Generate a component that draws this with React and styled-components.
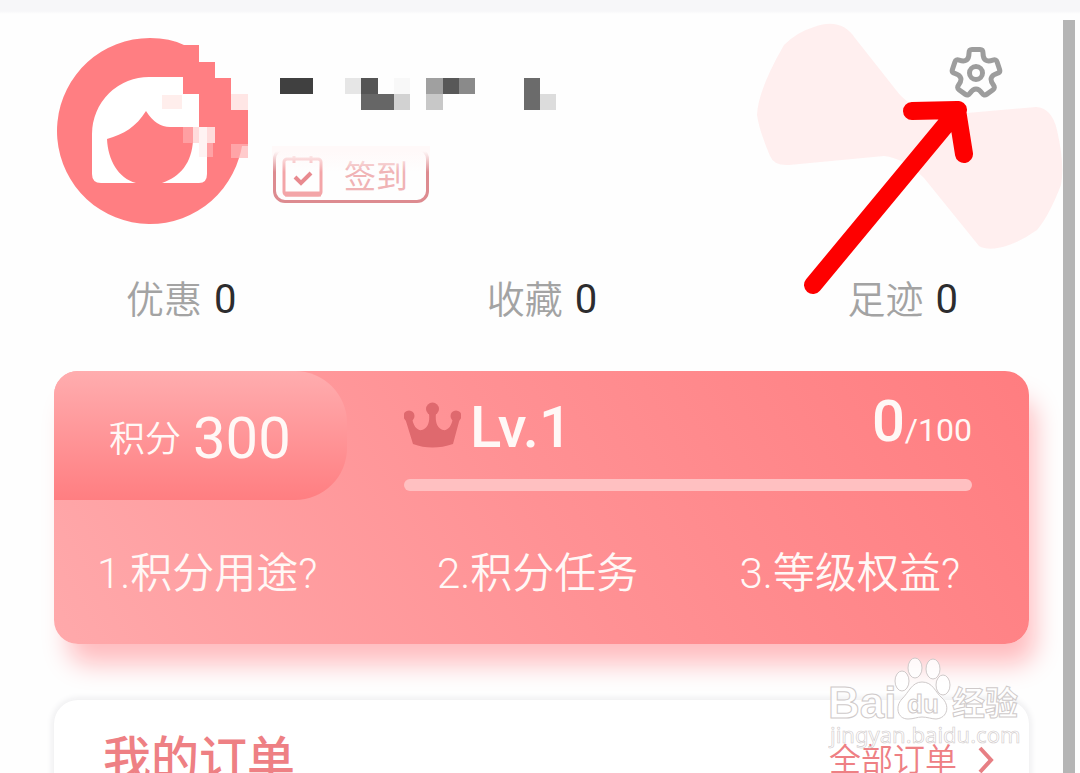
import styled, { createGlobalStyle } from "styled-components";

const COLOR = {
    pink: "#ff7e82",
    title: "#ee8084",
    line: "#dd8b90",
    gray: "#a3a3a3",
    dark: "#2c2c2e",
};

const GlobalStyle = createGlobalStyle`
    *{
        box-sizing: border-box;
    }
    body{
        margin: 0;
        background-color: #fefefe;
        font-family: Roboto, "Noto Sans CJK SC", sans-serif;
    }
    button, a{
        font-family: inherit;
        color: inherit;
        text-decoration: none;
    }
`;

const Page = styled.div`
    position: relative;
    height: 100vh;
    overflow: hidden;
    display: flex;
    flex-direction: column;
`;

const TopStrip = styled.div`
    flex: none;
    height: 14px;
    background: linear-gradient(#f7f7f9 80%, #fefefe);
`;

const Body = styled.div`
    flex: 1;
    min-height: 0;
    display: flex;
    padding-right: 5px;
`;

const Content = styled.main`
    flex: 1;
    min-width: 0;
    padding: 0 34px 0 54px;
`;

const ScrollTrack = styled.div`
    flex: none;
    width: 12px;
    margin-top: 6px;
    background-color: #b5b5b5;
`;

const Profile = styled.header`
    display: flex;
    align-items: flex-start;
    padding: 24px 26px 0 3px;
    height: 220px;
`;

const AvatarSvg = styled.svg`
    display: block;
    flex: none;
    width: 192px;
    height: 186px;
`;

const UserInfo = styled.div`
    flex: 1;
    display: flex;
    flex-direction: column;
    align-items: flex-start;
    gap: 37px;
    padding: 40px 0 0 24px;
    svg{
        display: block;
    }
`;

const NameSvg = styled.svg`
    width: 278px;
    height: 32px;
    margin-left: 7px;
`;

const SignButton = styled.button`
    position: relative;
    width: 156px;
    height: 56px;
    padding: 4px 18px 0 6px;
    display: flex;
    align-items: center;
    justify-content: space-between;
    border: 3px solid ${COLOR.line};
    border-radius: 12px;
    background: none;
    font-size: 32px;
    line-height: 44px;
    color: #f0b3b5;
    cursor: pointer;
    &::after{
        content: "";
        position: absolute;
        inset: -4px -4px 28px;
        background: linear-gradient(#fff9f9 20%, #fff9f900);
    }
`;

const SettingButton = styled.button`
    padding: 0;
    margin-top: 8px;
    border: none;
    background: none;
    cursor: pointer;
    svg{
        display: block;
        width: 54px;
        height: 54px;
    }
`;

const BowSvg = styled.svg`
    position: absolute;
    top: 20px;
    right: 16px;
    width: 308px;
    height: 232px;
    z-index: -1;
`;

const ArrowSvg = styled.svg`
    position: absolute;
    top: 96px;
    right: 104px;
    width: 176px;
    height: 202px;
    pointer-events: none;
`;

const Stats = styled.nav`
    display: flex;
    justify-content: space-between;
    padding: 36px 71px 0 72px;
    font-size: 38px;
    line-height: 60px;
`;

const Stat = styled.a`
    display: flex;
    gap: 12px;
    color: ${COLOR.gray};
    font-weight: 350;
    b{
        font-size: 40px;
        font-weight: 400;
        color: ${COLOR.dark};
    }
`;

const LevelCard = styled.section`
    margin-top: 41px;
    border-radius: 24px;
    overflow: hidden;
    color: #fff8f6;
    background: linear-gradient(60deg, #ffa9ab, #ff9194 50%, #ff7d80);
    box-shadow: 10px 24px 26px -4px #ffbcbf;
`;

const LevelTop = styled.div`
    display: flex;
    height: 129px;
`;

const Points = styled.div`
    width: 293px;
    display: flex;
    align-items: center;
    gap: 12px;
    padding-left: 55px;
    border-radius: 0 52px 52px 0;
    background: linear-gradient(#ffadaf, #ff7e81);
    font-size: 36px;
    font-weight: 350;
    b{
        padding-top: 4px;
        font-size: 58px;
        font-weight: 400;
    }
`;

const Level = styled.div`
    flex: 1;
    padding: 24px 57px 0;
`;

const LevelRow = styled.div`
    display: flex;
    align-items: center;
    height: 60px;
    svg{
        width: 57px;
        height: 46px;
        margin-right: 9px;
    }
`;

const LevelName = styled.strong`
    flex: 1;
    padding-top: 4px;
    font-size: 58px;
    font-weight: 500;
    line-height: 60px;
`;

const LevelScore = styled.span`
    font-size: 32px;
    font-weight: 400;
    line-height: 60px;
    b{
        font-size: 58px;
        font-weight: 500;
    }
`;

const Track = styled.div`
    height: 12px;
    margin-top: 24px;
    border-radius: 6px;
    background-color: #ffc0c1;
`;

const Links = styled.div`
    display: grid;
    grid-template-columns: 340px 1fr auto;
    padding: 42px 69px 38px 43px;
    font-size: 42px;
    font-weight: 350;
    line-height: 64px;
    a{
        white-space: nowrap;
    }
`;

const OrderCard = styled.section`
    display: flex;
    align-items: center;
    justify-content: space-between;
    margin-top: 56px;
    height: 240px;
    padding: 24px 34px 144px 49px;
    border-radius: 24px;
    background-color: #fff;
    box-shadow: 0 0 6px 2px #ededef;
    color: ${COLOR.title};
    h2{
        margin: 0;
        font-size: 48px;
        font-weight: 500;
        line-height: 72px;
    }
    a{
        display: flex;
        align-items: center;
        gap: 20px;
        font-size: 32px;
        font-weight: 350;
        line-height: 72px;
    }
    svg{
        width: 18px;
        height: 28px;
    }
`;

const WatermarkSvg = styled.svg`
    position: absolute;
    right: 56px;
    bottom: 20px;
    width: 196px;
    height: 98px;
    pointer-events: none;
`;

// x, y, width, height, fill
const NAME_BLOCKS = [
    [0, 0, 33, 16, "#404040"],
    [65, 0, 16, 16, "#e6e6e6"],
    [81, 0, 17, 16, "#555"],
    [114, 0, 16, 16, "#f8f8f8"],
    [81, 16, 33, 16, "#666"],
    [114, 16, 16, 16, "#d2d2d2"],
    [146, 0, 17, 16, "#a0a0a0"],
    [163, 0, 16, 16, "#585858"],
    [179, 0, 16, 16, "#8a8a8a"],
    [146, 16, 17, 16, "#c8c8c8"],
    [244, 0, 16, 32, "#6b6b6b"],
    [260, 16, 16, 16, "#dcdcdc"],
];

const STATS = [
    { name: "优惠", count: 0 },
    { name: "收藏", count: 0 },
    { name: "足迹", count: 0 },
];

const LINKS = ["1.积分用途?", "2.积分任务", "3.等级权益?"];

// 톱니 5개를 72도씩 돌려서 path를 만든다
function gearPath(){
    const point = (x, y, turn) => {
        const a = turn * Math.PI * 2 / 5;
        const px = x * Math.cos(a) - y * Math.sin(a);
        const py = x * Math.sin(a) + y * Math.cos(a);
        return px.toFixed(2) + " " + py.toFixed(2);
    };
    let d = "M" + point(-7, -20, 0);
    for(let i = 0; i < 5; i++){
        d += ` Q${point(-7, -23.5, i)} ${point(-4, -23.5, i)}`;
        d += ` L${point(4, -23.5, i)}`;
        d += ` Q${point(7, -23.5, i)} ${point(7, -20, i)}`;
        d += ` C${point(7, -13, i)} ${point(-7, -13, i + 1)} ${point(-7, -20, i + 1)}`;
    }
    return d + "Z";
}

function Avatar(){
    return(
        <AvatarSvg viewBox="57 38 192 186" role="img" aria-label="头像">
            <path fill={COLOR.pink} d="M150 38Q170 38 184 45H199V62H215V78H231V110H248V146H242Q241 152 239 158A93 93 0 1 1 150 38Z"/>
            <path fill="#fff" d="M92 134A57 57 0 0 1 150 77H183V94H199V127H207V174Q207 183 199 183H162C180 177 192 163 193 140V127H170Q156 127 146 111C136 127 124 134 107 139C108 160 118 178 136 183H101Q92 183 92 174Z"/>
            <rect x="162" y="95" width="20" height="14" fill="#ffeeec"/>
            <rect x="183" y="127" width="16" height="16" fill="#ff9fa2"/>
            <rect x="193" y="127" width="22" height="16" fill="#ffdcdc"/>
            <rect x="199" y="127" width="8" height="30" fill="#fff3f3"/>
            <rect x="207" y="143" width="6" height="14" fill="#ffa2a5"/>
            <rect x="231" y="94" width="17" height="16" fill="#ffe6e5"/>
            <rect x="231" y="144" width="17" height="14" fill="#ffb5b6" opacity="0.7"/>
        </AvatarSvg>
    )
}

function Watermark(){
    return(
        <WatermarkSvg viewBox="828 655 196 98" fill="#fff" stroke="#cfcaca" fontFamily="Liberation Sans, Noto Sans CJK SC, sans-serif">
            <g fillOpacity="0.85">
                <ellipse cx="902" cy="681" rx="7" ry="10"/>
                <ellipse cx="915" cy="668" rx="7" ry="10"/>
                <ellipse cx="933" cy="669" rx="7" ry="10"/>
                <ellipse cx="943" cy="685" rx="7" ry="10"/>
                <path d="M922 682C912 682 909 692 902 699C895 706 897 719 908 719C914 719 917 717 922 717C927 717 932 719 936 719C948 718 950 705 942 698C935 692 933 682 922 682Z"/>
                <text x="828" y="718" fontSize="44" fontWeight="700">Bai</text>
                <text x="907" y="713" fontSize="26" fontWeight="700">du</text>
                <text x="952" y="715" fontSize="33" fontWeight="700" fontFamily="Noto Sans CJK SC, sans-serif">经验</text>
            </g>
            <text x="830" y="743" fontSize="22" fillOpacity="0.85" strokeWidth="0.6" fontFamily="Noto Sans, sans-serif">jingyan.baidu.com</text>
        </WatermarkSvg>
    )
}

export default function App(){
    return(
        <Page>
            <GlobalStyle/>
            <TopStrip/>
            <BowSvg viewBox="757 20 308 232" fill="#ffefef">
                <path d="M815 27Q842 17 856 38L897 90Q908 105 934 116L1037 107Q1053 108 1058 130Q1066 165 1062 185Q1050 216 1038 230Q1024 240 1010 245Q990 252 980 246L925 178Q905 158 885 156L790 165Q775 166 771 156Q760 130 758 115Q759 90 785 45Q798 32 815 27Z"/>
            </BowSvg>
            <Body>
                <Content>
                    <Profile>
                        <Avatar/>
                        <UserInfo>
                            <NameSvg viewBox="0 0 278 32" shapeRendering="crispEdges">
                                {
                                    NAME_BLOCKS.map(([x, y, w, h, fill], i) => (
                                        <rect key={i} x={x} y={y} width={w} height={h} fill={fill}/>
                                    ))
                                }
                            </NameSvg>
                            <SignButton type="button">
                                <svg width="42" height="42" viewBox="0 0 42 42" fill="none" stroke="#f3a5a8">
                                    <rect x="2" y="3" width="37" height="36" rx="3" strokeWidth="3"/>
                                    <path d="M3 38H39" strokeWidth="5"/>
                                    <path d="M12 0V7M29 0V7" strokeWidth="3"/>
                                    <path d="M13 21L19 27L29 17" stroke="#e88a8f" strokeWidth="4"/>
                                </svg>
                                签到
                            </SignButton>
                        </UserInfo>
                        <SettingButton type="button" aria-label="设置">
                            <svg viewBox="-27 -27 54 54" fill="none" stroke="#9d9d9d" strokeWidth="5">
                                <path d={gearPath()}/>
                                <circle r="6.5"/>
                            </svg>
                        </SettingButton>
                    </Profile>
                    <Stats>
                        {
                            STATS.map((stat) => (
                                <Stat key={stat.name} href="#">
                                    {stat.name}<b>{stat.count}</b>
                                </Stat>
                            ))
                        }
                    </Stats>
                    <LevelCard>
                        <LevelTop>
                            <Points>积分<b>300</b></Points>
                            <Level>
                                <LevelRow>
                                    <svg viewBox="0 0 57 46" fill="#df696e">
                                        <circle cx="28.5" cy="7" r="6.5"/>
                                        <circle cx="5" cy="14" r="5.5"/>
                                        <circle cx="52" cy="14" r="5.5"/>
                                        <path d="M1 16L8 15C9 25 14 29 18 28C24 26 26 20 25 11H32C31 20 33 26 39 28C43 29 48 25 49 15L56 16L49 42Q28 49 9 42Z"/>
                                    </svg>
                                    <LevelName>Lv.1</LevelName>
                                    <LevelScore><b>0</b>/100</LevelScore>
                                </LevelRow>
                                <Track/>
                            </Level>
                        </LevelTop>
                        <Links>
                            {LINKS.map((link) => <a key={link} href="#">{link}</a>)}
                        </Links>
                    </LevelCard>
                    <OrderCard>
                        <h2>我的订单</h2>
                        <a href="#">
                            全部订单
                            <svg viewBox="0 0 18 28" fill="none" stroke="#e77f84" strokeWidth="4">
                                <path d="M3 2L14 14L3 26"/>
                            </svg>
                        </a>
                    </OrderCard>
                </Content>
                <ScrollTrack/>
            </Body>
            <ArrowSvg viewBox="800 96 176 202" fill="none" stroke="#fe0000" strokeWidth="18" strokeLinecap="round" strokeLinejoin="round">
                <path d="M813 285L958 110M912 111L957 110L964 154"/>
            </ArrowSvg>
            <Watermark/>
        </Page>
    )
}
